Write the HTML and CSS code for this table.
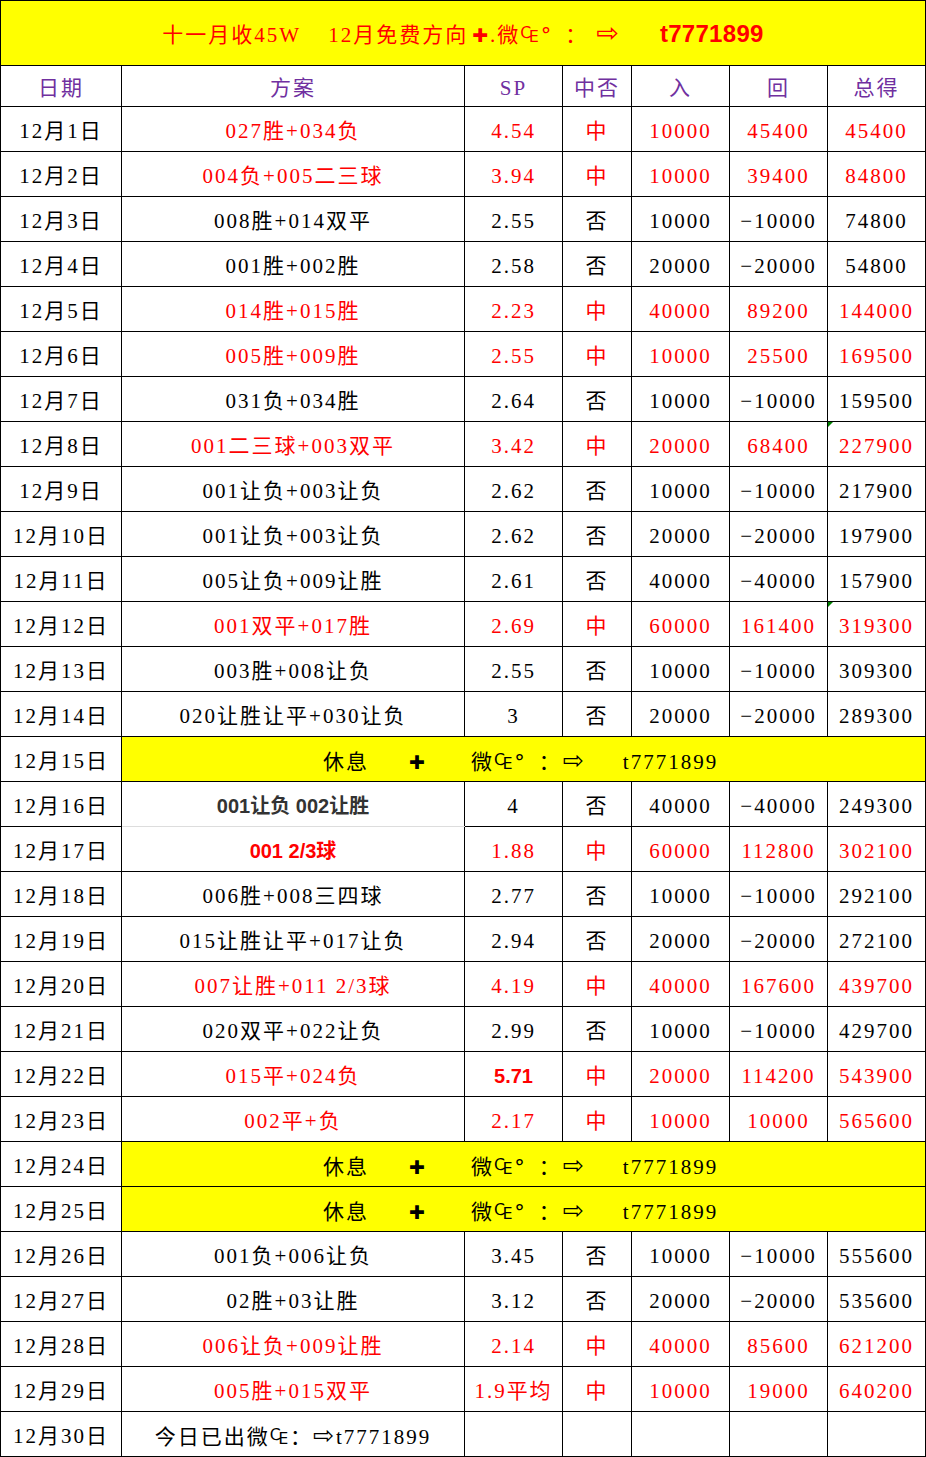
FILE: index.html
```html
<!DOCTYPE html>
<html lang="zh">
<head>
<meta charset="utf-8">
<title>12月</title>
<link rel="stylesheet" href="styles.css">
</head>
<body>
<table class="sheet">
  <colgroup>
    <col class="c-date"><col class="c-plan"><col class="c-sp"><col class="c-hit"><col class="c-in"><col class="c-back"><col class="c-total">
  </colgroup>
  <tr class="title-row">
    <td colspan="7" class="title">十一月收45W<span class="gap"></span>12月免费方向<span class="cross">✚</span>.微<span class="sym">₠°</span><span class="colon">：</span><span class="arrow">⇨</span><span class="gap"></span><span class="tid">t7771899</span></td>
  </tr>
  <tr class="head">
    <td>日期</td><td>方案</td><td>SP</td><td>中否</td><td>入</td><td>回</td><td>总得</td>
  </tr>
  <tr class="win"><td class="d">12月1日</td><td>027胜+034负</td><td>4.54</td><td>中</td><td>10000</td><td>45400</td><td>45400</td></tr>
  <tr class="win"><td class="d">12月2日</td><td>004负+005二三球</td><td>3.94</td><td>中</td><td>10000</td><td>39400</td><td>84800</td></tr>
  <tr><td class="d">12月3日</td><td>008胜+014双平</td><td>2.55</td><td>否</td><td>10000</td><td>−10000</td><td>74800</td></tr>
  <tr><td class="d">12月4日</td><td>001胜+002胜</td><td>2.58</td><td>否</td><td>20000</td><td>−20000</td><td>54800</td></tr>
  <tr class="win"><td class="d">12月5日</td><td>014胜+015胜</td><td>2.23</td><td>中</td><td>40000</td><td>89200</td><td>144000</td></tr>
  <tr class="win"><td class="d">12月6日</td><td>005胜+009胜</td><td>2.55</td><td>中</td><td>10000</td><td>25500</td><td>169500</td></tr>
  <tr><td class="d">12月7日</td><td>031负+034胜</td><td>2.64</td><td>否</td><td>10000</td><td>−10000</td><td>159500</td></tr>
  <tr class="win"><td class="d">12月8日</td><td>001二三球+003双平</td><td>3.42</td><td>中</td><td>20000</td><td>68400</td><td class="flag">227900</td></tr>
  <tr><td class="d">12月9日</td><td>001让负+003让负</td><td>2.62</td><td>否</td><td>10000</td><td>−10000</td><td>217900</td></tr>
  <tr><td class="d">12月10日</td><td>001让负+003让负</td><td>2.62</td><td>否</td><td>20000</td><td>−20000</td><td>197900</td></tr>
  <tr><td class="d">12月11日</td><td>005让负+009让胜</td><td>2.61</td><td>否</td><td>40000</td><td>−40000</td><td>157900</td></tr>
  <tr class="win"><td class="d">12月12日</td><td>001双平+017胜</td><td>2.69</td><td>中</td><td>60000</td><td>161400</td><td class="flag">319300</td></tr>
  <tr><td class="d">12月13日</td><td>003胜+008让负</td><td>2.55</td><td>否</td><td>10000</td><td>−10000</td><td>309300</td></tr>
  <tr><td class="d">12月14日</td><td>020让胜让平+030让负</td><td>3</td><td>否</td><td>20000</td><td>−20000</td><td>289300</td></tr>
  <tr class="rest"><td class="d">12月15日</td><td colspan="6" class="note"><span class="r1">休息</span><span class="rc">✚</span><span class="r2">微<span class="sym">₠°</span></span><span class="r3">：</span><span class="r4">⇨</span><span class="r5">t7771899</span></td></tr>
  <tr><td class="d">12月16日</td><td class="bold gray soft">001让负 002让胜</td><td>4</td><td>否</td><td>40000</td><td>−40000</td><td>249300</td></tr>
  <tr class="win"><td class="d">12月17日</td><td class="bold">001 2/3球</td><td>1.88</td><td>中</td><td>60000</td><td>112800</td><td>302100</td></tr>
  <tr><td class="d">12月18日</td><td>006胜+008三四球</td><td>2.77</td><td>否</td><td>10000</td><td>−10000</td><td>292100</td></tr>
  <tr><td class="d">12月19日</td><td>015让胜让平+017让负</td><td>2.94</td><td>否</td><td>20000</td><td>−20000</td><td>272100</td></tr>
  <tr class="win"><td class="d">12月20日</td><td>007让胜+011 2/3球</td><td>4.19</td><td>中</td><td>40000</td><td>167600</td><td>439700</td></tr>
  <tr><td class="d">12月21日</td><td>020双平+022让负</td><td>2.99</td><td>否</td><td>10000</td><td>−10000</td><td>429700</td></tr>
  <tr class="win"><td class="d">12月22日</td><td>015平+024负</td><td class="bold">5.71</td><td>中</td><td>20000</td><td>114200</td><td>543900</td></tr>
  <tr class="win"><td class="d">12月23日</td><td>002平+负</td><td>2.17</td><td>中</td><td>10000</td><td>10000</td><td>565600</td></tr>
  <tr class="rest"><td class="d">12月24日</td><td colspan="6" class="note"><span class="r1">休息</span><span class="rc">✚</span><span class="r2">微<span class="sym">₠°</span></span><span class="r3">：</span><span class="r4">⇨</span><span class="r5">t7771899</span></td></tr>
  <tr class="rest"><td class="d">12月25日</td><td colspan="6" class="note"><span class="r1">休息</span><span class="rc">✚</span><span class="r2">微<span class="sym">₠°</span></span><span class="r3">：</span><span class="r4">⇨</span><span class="r5">t7771899</span></td></tr>
  <tr><td class="d">12月26日</td><td>001负+006让负</td><td>3.45</td><td>否</td><td>10000</td><td>−10000</td><td>555600</td></tr>
  <tr><td class="d">12月27日</td><td>02胜+03让胜</td><td>3.12</td><td>否</td><td>20000</td><td>−20000</td><td>535600</td></tr>
  <tr class="win"><td class="d">12月28日</td><td>006让负+009让胜</td><td>2.14</td><td>中</td><td>40000</td><td>85600</td><td>621200</td></tr>
  <tr class="win"><td class="d">12月29日</td><td>005胜+015双平</td><td>1.9平均</td><td>中</td><td>10000</td><td>19000</td><td>640200</td></tr>
  <tr><td class="d">12月30日</td><td>今日已出微<span class="sym">₠</span>：<span class="arrow">⇨</span>t7771899</td><td></td><td></td><td></td><td></td><td></td></tr>
</table>
</body>
</html>
```
FILE: styles.css
```css
html, body {
  margin: 0;
  padding: 0;
  background: #fff;
}
.sheet {
  border-collapse: collapse;
  table-layout: fixed;
  width: 926px;
  font-family: "Liberation Serif", "Noto Sans CJK SC", serif;
  font-size: 21px;
  letter-spacing: 2px;
  color: #000;
}
.c-date { width: 121px; }
.c-plan { width: 343px; }
.c-sp { width: 98px; }
.c-hit { width: 69px; }
.c-in { width: 98px; }
.c-back { width: 98px; }
.c-total { width: 98px; }

.sheet td {
  border: 1px solid #000;
  padding: 4px 0 0 0;
  text-align: center;
  vertical-align: middle;
  white-space: nowrap;
  overflow: hidden;
  height: 40px;
  line-height: 24px;
}
.title-row td {
  height: 62px;
  padding-top: 2px;
  background: #ffff00;
  color: #ff0000;
}
.head td {
  height: 37px;
  padding-top: 3px;
  color: #7030a0;
}
.title .gap { display: inline-block; width: 27px; }
.title .cross { font-family: "DejaVu Sans", sans-serif; font-weight: bold; font-size: 19px; margin-left: 4px; }
.title .colon { margin-left: 12px; }
.title .arrow { font-family: "DejaVu Sans", sans-serif; font-size: 27px; margin-left: 8px; }
.title .tid {
  font-family: "Liberation Sans", Arial, sans-serif;
  font-weight: bold;
  font-size: 24px;
  letter-spacing: 0.3px;
  margin-left: 12px;
}
.sym { font-family: "DejaVu Serif", "DejaVu Sans", serif; }
.arrow { font-family: "DejaVu Sans", sans-serif; font-size: 25px; }

.win td { color: #ff0000; }
.win td.d { color: #000; }

.bold {
  font-family: "Liberation Sans", "Noto Sans CJK SC", sans-serif;
  font-weight: bold;
  letter-spacing: 0;
  font-size: 20px;
}
.gray { color: #333; }
.sheet td.soft { border-bottom-color: #dddddd; }

.flag { position: relative; }
.flag::before {
  content: "";
  position: absolute;
  left: 0;
  top: 0;
  border-top: 5px solid #008000;
  border-right: 5px solid transparent;
}

.rest td.note {
  background: #ffff00;
  text-align: left;
  padding-left: 201px;
}
.note span { display: inline-block; }
.note .rc { font-family: "DejaVu Sans", sans-serif; font-weight: bold; font-size: 19px; margin-left: 40px; }
.note .r2 { margin-left: 44px; }
.note .r3 { margin-left: 12px; }
.note .r4 { font-family: "DejaVu Sans", sans-serif; font-size: 25px; margin-left: 1px; }
.note .r5 { margin-left: 37px; }
```
